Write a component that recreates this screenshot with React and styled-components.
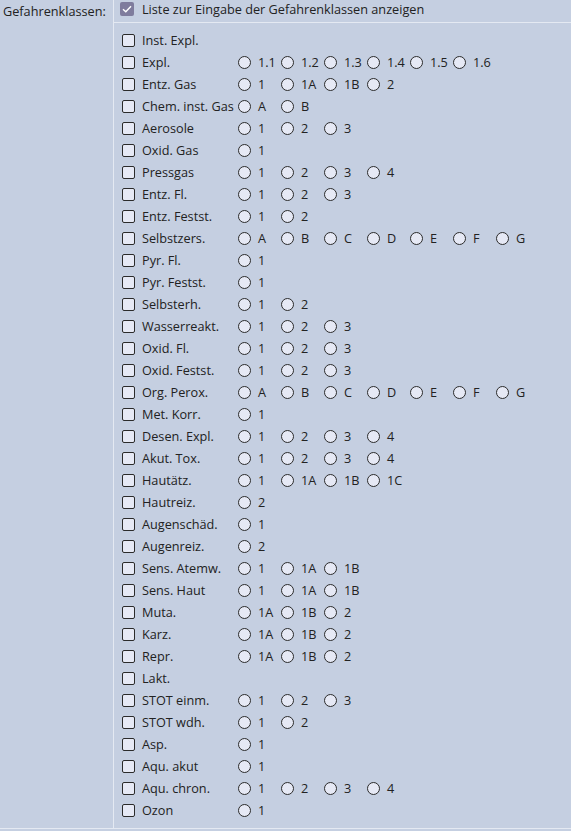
import React from "react";
import styled, { createGlobalStyle } from "styled-components";

const GlobalStyle = createGlobalStyle`
  html, body {
    margin: 0;
    padding: 0;
    background: #c5cfe1;
  }
  body {
    font-family: "Open Sans", "Liberation Sans", sans-serif;
    font-size: 12.7px;
    color: #222;
  }
`;

const classes = [
  ["Inst. Expl.", []],
  ["Expl.", ["1.1", "1.2", "1.3", "1.4", "1.5", "1.6"]],
  ["Entz. Gas", ["1", "1A", "1B", "2"]],
  ["Chem. inst. Gas", ["A", "B"]],
  ["Aerosole", ["1", "2", "3"]],
  ["Oxid. Gas", ["1"]],
  ["Pressgas", ["1", "2", "3", "4"]],
  ["Entz. Fl.", ["1", "2", "3"]],
  ["Entz. Festst.", ["1", "2"]],
  ["Selbstzers.", ["A", "B", "C", "D", "E", "F", "G"]],
  ["Pyr. Fl.", ["1"]],
  ["Pyr. Festst.", ["1"]],
  ["Selbsterh.", ["1", "2"]],
  ["Wasserreakt.", ["1", "2", "3"]],
  ["Oxid. Fl.", ["1", "2", "3"]],
  ["Oxid. Festst.", ["1", "2", "3"]],
  ["Org. Perox.", ["A", "B", "C", "D", "E", "F", "G"]],
  ["Met. Korr.", ["1"]],
  ["Desen. Expl.", ["1", "2", "3", "4"]],
  ["Akut. Tox.", ["1", "2", "3", "4"]],
  ["Hautätz.", ["1", "1A", "1B", "1C"]],
  ["Hautreiz.", ["2"]],
  ["Augenschäd.", ["1"]],
  ["Augenreiz.", ["2"]],
  ["Sens. Atemw.", ["1", "1A", "1B"]],
  ["Sens. Haut", ["1", "1A", "1B"]],
  ["Muta.", ["1A", "1B", "2"]],
  ["Karz.", ["1A", "1B", "2"]],
  ["Repr.", ["1A", "1B", "2"]],
  ["Lakt.", []],
  ["STOT einm.", ["1", "2", "3"]],
  ["STOT wdh.", ["1", "2"]],
  ["Asp.", ["1"]],
  ["Aqu. akut", ["1"]],
  ["Aqu. chron.", ["1", "2", "3", "4"]],
  ["Ozon", ["1"]],
];

const Form = styled.div`
  display: grid;
  grid-template-columns: 114px 1fr;
  border-bottom: 1px solid #e4e9f2;
`;

const FieldLabel = styled.div`
  padding: 2px 3px;
  line-height: 18px;
  border-right: 1px solid #e4e9f2;
  white-space: nowrap;
`;

const FieldBody = styled.div`
  display: flex;
  flex-direction: column;
`;

const Header = styled.label`
  display: flex;
  align-items: center;
  height: 23px;
  padding-left: 6px;
  border-bottom: 1px solid #e4e9f2;
  box-sizing: border-box;
  gap: 8px;
`;

const CheckedBox = styled.span`
  width: 14px;
  height: 14px;
  margin-top: -4px;
  border-radius: 2px;
  background: #7f7c9d;
  display: flex;
  align-items: center;
  justify-content: center;
`;

const HeaderText = styled.span`
  margin-top: -4px;
`;

const List = styled.div`
  padding: 6px 0 7px 8px;
`;

const Row = styled.div`
  display: flex;
  align-items: center;
  height: 22px;
`;

const Box = styled.span`
  width: 13px;
  height: 13px;
  box-sizing: border-box;
  border: 1px solid #2b2b2b;
  border-radius: 2px;
  background: #e6e9f5;
  flex: none;
`;

const Name = styled.span`
  width: 96px;
  padding-left: 7px;
  white-space: nowrap;
  flex: none;
`;

const Option = styled.span`
  width: 43px;
  display: flex;
  align-items: center;
  flex: none;
`;

const Radio = styled.span`
  width: 13px;
  height: 13px;
  box-sizing: border-box;
  border: 1px solid #2b2b2b;
  border-radius: 50%;
  background: #e6e9f5;
  margin-right: 7px;
  flex: none;
`;

export default function App() {
  return (
    <>
      <GlobalStyle />
      <Form>
        <FieldLabel>Gefahrenklassen:</FieldLabel>
        <FieldBody>
          <Header>
            <CheckedBox>
              <svg width="10" height="8" viewBox="0 0 10 8" fill="none">
                <path d="M1 4.2 L3.8 6.8 L9 1.2" stroke="#fff" strokeWidth="1.4" />
              </svg>
            </CheckedBox>
            <HeaderText>Liste zur Eingabe der Gefahrenklassen anzeigen</HeaderText>
          </Header>
          <List>
            {classes.map(([name, opts]) => (
              <Row key={name}>
                <Box />
                <Name>{name}</Name>
                {opts.map((o) => (
                  <Option key={o}>
                    <Radio />
                    {o}
                  </Option>
                ))}
              </Row>
            ))}
          </List>
        </FieldBody>
      </Form>
    </>
  );
}
